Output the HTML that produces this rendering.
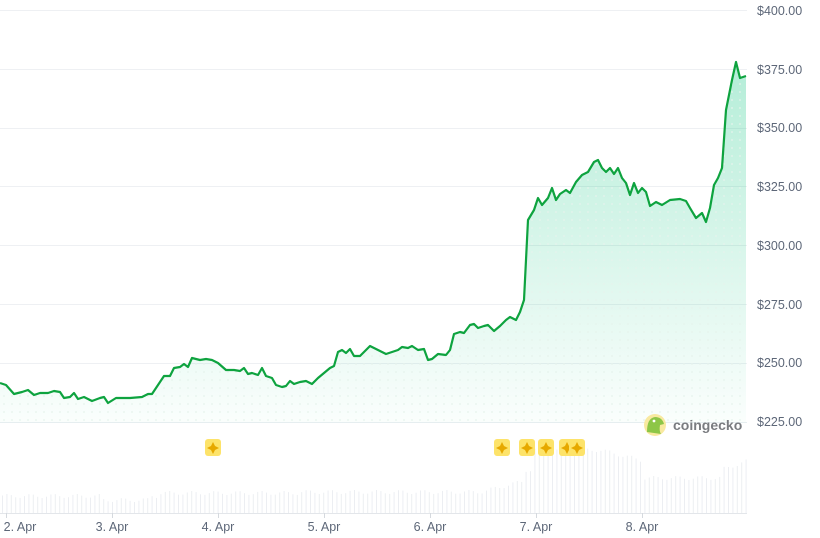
<!DOCTYPE html>
<html><head><meta charset="utf-8"><style>
html,body{margin:0;padding:0;background:#fff;width:820px;height:538px;overflow:hidden}
svg text{font-family:"Liberation Sans",sans-serif}
</style></head><body>
<svg id="s" width="820" height="538" viewBox="0 0 820 538" xmlns="http://www.w3.org/2000/svg">
<defs>
<linearGradient id="g" x1="0" y1="0" x2="0" y2="1">
<stop offset="0" stop-color="#16c784" stop-opacity="0.32"/>
<stop offset="1" stop-color="#16c784" stop-opacity="0.02"/>
</linearGradient>
<pattern id="dots" width="8" height="8" patternUnits="userSpaceOnUse"><circle cx="4" cy="4" r="0.9" fill="#e6f3ec"/></pattern>
</defs>
<g stroke="#eef0f3" stroke-width="1">
<line x1="0" y1="10.5" x2="747" y2="10.5"/>
<line x1="0" y1="69.5" x2="747" y2="69.5"/>
<line x1="0" y1="128.5" x2="747" y2="128.5"/>
<line x1="0" y1="186.5" x2="747" y2="186.5"/>
<line x1="0" y1="245.5" x2="747" y2="245.5"/>
<line x1="0" y1="304.5" x2="747" y2="304.5"/>
<line x1="0" y1="363.5" x2="747" y2="363.5"/>
</g>
<g id="vol" fill="#eceef2"></g>
<line x1="0" y1="513.5" x2="747" y2="513.5" stroke="#e3e6ea"/>
<g stroke="#d5d9de"><line x1="6.5" y1="513" x2="6.5" y2="518"/><line x1="112.5" y1="513" x2="112.5" y2="518"/><line x1="218.5" y1="513" x2="218.5" y2="518"/><line x1="324.5" y1="513" x2="324.5" y2="518"/><line x1="430.5" y1="513" x2="430.5" y2="518"/><line x1="536.5" y1="513" x2="536.5" y2="518"/><line x1="642.5" y1="513" x2="642.5" y2="518"/></g>
<path id="area" fill="url(#g)"/>
<path id="area2" fill="url(#dots)"/>
<line x1="0" y1="422.5" x2="747" y2="422.5" stroke="#e6eef0"/>
<polyline id="ln" fill="none" stroke="#0ea33f" stroke-width="2.2" stroke-linejoin="round"/>
<g font-size="12.5" fill="#5d6778">
<text x="757" y="15">$400.00</text><text x="757" y="74">$375.00</text><text x="757" y="132">$350.00</text><text x="757" y="191">$325.00</text><text x="757" y="250">$300.00</text><text x="757" y="309">$275.00</text><text x="757" y="367">$250.00</text><text x="757" y="426">$225.00</text>
</g>
<g font-size="12.5" fill="#5d6778" text-anchor="middle">
<text x="20" y="531">2. Apr</text><text x="112" y="531">3. Apr</text><text x="218" y="531">4. Apr</text><text x="324" y="531">5. Apr</text><text x="430" y="531">6. Apr</text><text x="536" y="531">7. Apr</text><text x="642" y="531">8. Apr</text>
</g>
<g id="ev"></g>
<circle cx="655" cy="425" r="11" fill="#f8e9a0"/>
<path d="M647 432 Q647 418 655 417 Q662 417 664 424 L660 425 Q659 431 661 434 Z" fill="#8dc647"/>
<circle cx="654" cy="421" r="1.4" fill="#fff"/>
<text x="673" y="430" font-size="14" font-weight="bold" fill="#7a7c80">coingecko</text>
</svg>
<script>
var pts="0,383 6,385 14,394 22,392 28,390 34,395 40,393 48,393 54,391 60,392 64,398 70,397 74,393 78,399 84,397 92,401 100,398 104,397 108,403 116,398 130,398 142,397 148,394 152,394 160,382 164,376 170,376 174,368 180,367 184,364 188,367 192,358 200,360 206,359 212,360 218,363 226,370 234,370 240,371 244,368 248,374 252,373 258,375 262,368 266,376 272,378 276,385 282,387 286,386 290,381 294,384 300,382 306,381 312,384 318,378 324,373 330,368 334,366 338,352 342,350 346,353 350,349 354,356 360,356 364,352 370,346 376,349 380,351 386,354 392,352 398,350 402,347 408,348 412,346 418,350 424,349 428,360 432,359 438,354 446,355 450,350 454,334 460,332 464,333 470,325 474,324 478,328 484,326 488,325 494,331 500,326 506,320 510,317 516,320 520,312 524,300 528,220 534,210 538,198 542,205 548,198 552,188 556,200 560,194 566,190 570,193 576,182 582,175 588,172 594,162 598,160 602,168 606,172 610,168 614,174 618,168 622,178 626,183 630,195 634,183 638,193 642,188 646,192 650,206 656,202 662,205 670,200 680,199 686,201 690,208 696,218 702,213 706,222 710,208 714,185 718,178 722,168 726,110 732,80 736,62 740,78 746,76";
document.getElementById('ln').setAttribute('points',pts);
var d="M"+pts.split(' ').join(' L')+" L746,422 L0,422 Z";
document.getElementById('area').setAttribute('d',d);
document.getElementById('area2').setAttribute('d',d);
var v=document.getElementById('vol'),h='';
for(var x=2;x<747;x+=4.4){var t;
if(x<160)t=496+(x>100&&x<150?4:0);else if(x<300)t=493;else if(x<480)t=492;else if(x<522)t=492-(x-480)/4;
else if(x<530)t=470;else if(x<640)t=450+(x>600?(x-600)/4:0);else if(x<720)t=478;else t=470-(x-720)/3;
t+=Math.sin(x*1.7)*2;h+='<rect x="'+x.toFixed(1)+'" y="'+t.toFixed(1)+'" width="1" height="'+(513-t).toFixed(1)+'"/>';}
v.innerHTML=h;
var e=document.getElementById('ev'),s='';
[213,502,527,546,567,577].forEach(function(x){s+='<rect x="'+(x-8)+'" y="439" width="16" height="17" rx="3" fill="#fde36a"/><path d="M'+x+' 442 L'+(x+2)+' 446 L'+(x+6)+' 448 L'+(x+2)+' 450 L'+x+' 454 L'+(x-2)+' 450 L'+(x-6)+' 448 L'+(x-2)+' 446 Z" fill="#e6a800"/>';});
e.innerHTML=s;
</script>
</body></html>
